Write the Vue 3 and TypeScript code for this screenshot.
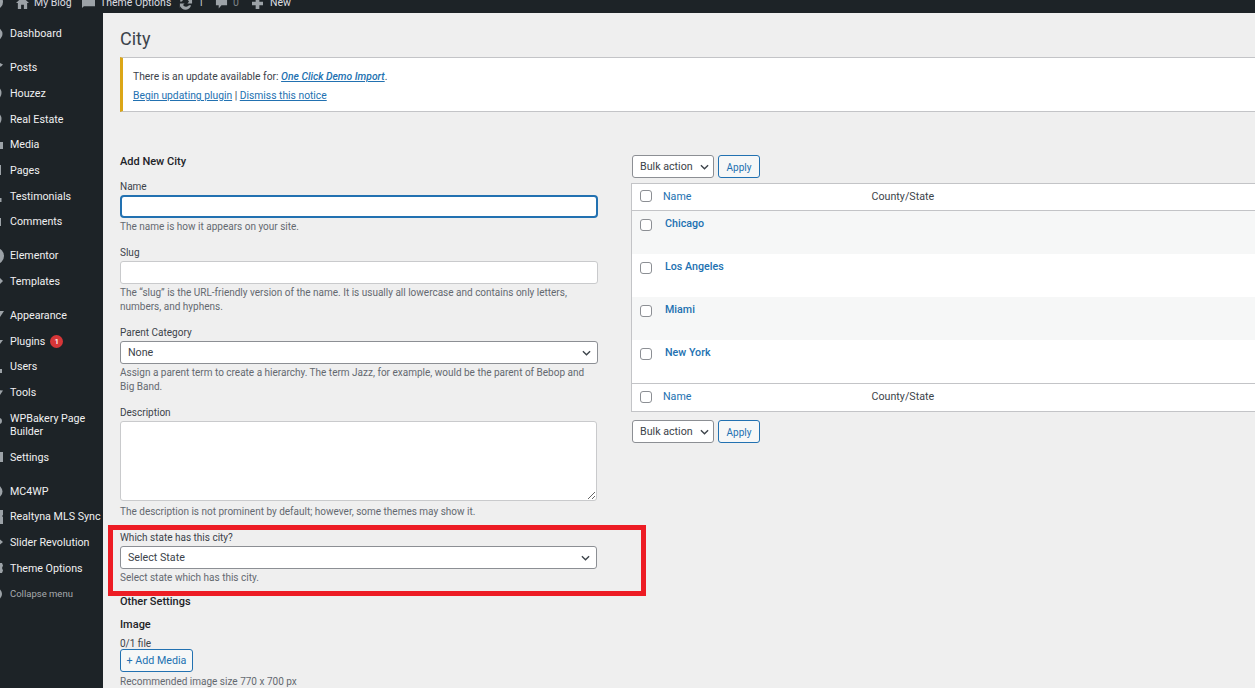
<script setup lang="ts">
interface MenuItem {
  label: string
  icon: string
  sep?: boolean
  tall?: boolean
  badge?: string
  muted?: boolean
}

const ring = 'M10 2.5a7.5 7.5 0 1 0 0 15a7.5 7.5 0 1 0 0-15zm0 1.6a5.9 5.9 0 1 1 0 11.8a5.9 5.9 0 1 1 0-11.8z'

const menu: MenuItem[] = [
  { label: 'Dashboard', icon: 'M12 3.5a6.5 6.5 0 1 0 0 13a6.5 6.5 0 1 0 0-13z' },
  { label: 'Posts', icon: 'M14 4l5 2.5l-2 2l-3 1z', sep: true },
  { label: 'Houzez', icon: ring },
  { label: 'Real Estate', icon: ring },
  { label: 'Media', icon: 'M12 7h7v7h-7z' },
  { label: 'Pages', icon: 'M11 5h6v10h-6z' },
  { label: 'Testimonials', icon: 'M12 12h5.5v4h-5.5z' },
  { label: 'Comments', icon: 'M11 6h6v8h-6z' },
  { label: 'Elementor', icon: 'M12 2a8 8 0 1 0 0 16a8 8 0 1 0 0-16z', sep: true },
  { label: 'Templates', icon: 'M12 7h4l3 3l-3 3h-4z' },
  { label: 'Appearance', icon: 'M12 6h8l-4 6z', sep: true },
  { label: 'Plugins', icon: 'M14 9h5l-3 4h-2z', badge: '1' },
  { label: 'Users', icon: 'M12 12h6v4h-6z' },
  { label: 'Tools', icon: 'M12 8l7 .5l-3 4.5h-4z' },
  { label: 'WPBakery Page Builder', icon: 'M15 3a3 3 0 1 0 0 6a3 3 0 0 0 0-6z', tall: true },
  { label: 'Settings', icon: 'M11 5h8v10h-8z' },
  { label: 'MC4WP', icon: 'M12 4a6.5 6.5 0 1 0 0 13a6.5 6.5 0 1 0 0-13z', sep: true },
  { label: 'Realtyna MLS Sync', icon: 'M12 3h7v5l-1 1l1 1v7h-7z' },
  { label: 'Slider Revolution', icon: 'M14 6l5 4l-5 4z' },
  { label: 'Theme Options', icon: 'M12 5h6l1 2.5l-1 2.5l1 2.5l-1 2.5h-6z' },
  { label: 'Collapse menu', icon: 'M12 4a6 6 0 1 0 0 12a6 6 0 1 0 0-12z', muted: true },
]

const cities = ['Chicago', 'Los Angeles', 'Miami', 'New York']
</script>

<template>
  <div class="page">
    <header class="topbar">
      <div class="topbar-inner">
        <svg class="bar-logo" viewBox="0 0 4 14"><circle cx="-4" cy="7" r="7" /></svg>
        <svg class="bar-home" viewBox="0 0 14 14"><path d="M7 1L0 7.5h2V14h3.5V9.500h3V14H12V7.500h2z" /></svg>
        <span class="bar-blog">My Blog</span>
        <svg class="bar-speech" viewBox="0 0 16 14"><path d="M1 2h13l1 1v8H3l-2 2z" /></svg>
        <span class="bar-theme">Theme Options</span>
        <svg class="bar-refresh" viewBox="0 0 16 16"><path d="M8 2a6 6 0 0 1 5.500 3.500L15 4v5h-5l1.700-1.700A4 4 0 0 0 4.200 7H2.100A6 6 0 0 1 8 2zM2 14V9h5l-1.700 1.700A4 4 0 0 0 11.800 11h2.100A6 6 0 0 1 2.500 12z" /></svg>
        <span class="bar-count">1</span>
        <svg class="bar-comment" viewBox="0 0 14 14"><path d="M1 1h12v8H7l-3 3.500V9H1z" /></svg>
        <span class="bar-zero">0</span>
        <svg class="bar-plus" viewBox="0 0 12 12"><path d="M4 0h4v4h4v4H8v4H4V8H0V4h4z" /></svg>
        <span class="bar-new">New</span>
      </div>
    </header>

    <div class="body-row">
      <nav class="sidebar">
        <a
          v-for="item in menu"
          :key="item.label"
          class="menu-item"
          :class="{ sep: item.sep, tall: item.tall, muted: item.muted }"
        >
          <svg class="menu-icon" viewBox="0 0 20 20"><path :d="item.icon" fill-rule="evenodd" /></svg>
          <span class="menu-label">{{ item.label }}</span>
          <span v-if="item.badge" class="badge">{{ item.badge }}</span>
        </a>
      </nav>

      <main class="content">
        <h1 class="title">City</h1>

        <div class="notice">
          <p>There is an update available for: <a class="strong-link">One Click Demo Import</a>.</p>
          <p class="notice-actions"><a>Begin updating plugin</a> | <a>Dismiss this notice</a></p>
        </div>

        <div class="columns">
          <section class="form-col">
            <h2 class="add-title">Add New City</h2>

            <label class="field-label">Name</label>
            <input class="text-input focus" type="text" />
            <p class="help">The name is how it appears on your site.</p>

            <label class="field-label next">Slug</label>
            <input class="text-input" type="text" />
            <p class="help">The “slug” is the URL-friendly version of the name. It is usually all lowercase and contains only letters, numbers, and hyphens.</p>

            <label class="field-label next">Parent Category</label>
            <div class="select-wrap">
              <select class="select"><option>None</option></select>
              <svg class="chevron" viewBox="0 0 10 6"><path d="M1 1l4 4l4-4" /></svg>
            </div>
            <p class="help">Assign a parent term to create a hierarchy. The term Jazz, for example, would be the parent of Bebop and Big Band.</p>

            <label class="field-label next">Description</label>
            <textarea class="textarea"></textarea>
            <p class="help desc-help">The description is not prominent by default; however, some themes may show it.</p>

            <div class="highlight">
              <label class="field-label">Which state has this city?</label>
              <div class="select-wrap narrow">
                <select class="select"><option>Select State</option></select>
                <svg class="chevron" viewBox="0 0 10 6"><path d="M1 1l4 4l4-4" /></svg>
              </div>
              <p class="help">Select state which has this city.</p>
            </div>

            <h3 class="other">Other Settings</h3>
            <h3 class="image-title">Image</h3>
            <div class="file-count">0/1 file</div>
            <button class="outline-btn add-media" type="button">+ Add Media</button>
            <p class="help rec">Recommended image size 770 x 700 px</p>
          </section>

          <section class="table-col">
            <div class="tablenav">
              <div class="select-wrap bulk">
                <select class="select"><option>Bulk actions</option></select>
                <svg class="chevron" viewBox="0 0 10 6"><path d="M1 1l4 4l4-4" /></svg>
              </div>
              <button class="outline-btn apply" type="button">Apply</button>
            </div>

            <div class="table">
              <div class="thead">
                <input class="check" type="checkbox" />
                <a class="col-name">Name</a>
                <span class="col-state">County/State</span>
              </div>
              <div v-for="city in cities" :key="city" class="tr">
                <input class="check" type="checkbox" />
                <a class="city">{{ city }}</a>
              </div>
              <div class="thead tfoot">
                <input class="check" type="checkbox" />
                <a class="col-name">Name</a>
                <span class="col-state">County/State</span>
              </div>
            </div>

            <div class="tablenav lower">
              <div class="select-wrap bulk">
                <select class="select"><option>Bulk actions</option></select>
                <svg class="chevron" viewBox="0 0 10 6"><path d="M1 1l4 4l4-4" /></svg>
              </div>
              <button class="outline-btn apply" type="button">Apply</button>
            </div>
          </section>
        </div>
      </main>
    </div>
  </div>
</template>

<style>
html, body { margin: 0; height: 688px; overflow: hidden; background: #f0f0f1; }
</style>

<style scoped>
* { box-sizing: border-box; }
.page {
  width: 1255px;
  height: 688px;
  overflow: hidden;
  font-family: Roboto, "Open Sans", sans-serif;
  font-size: 10px;
  color: #3c434a;
  background: #efefef;
}
.topbar { height: 13px; background: #1d2327; overflow: hidden; }
.topbar-inner {
  display: flex;
  align-items: center;
  height: 26px;
  margin-top: -11px;
  color: #c3c4c7;
  font-size: 10.500px;
  line-height: 13px;
}
.topbar-inner svg { flex: none; fill: #9ca2a7; }
.bar-logo { width: 4px; height: 14px; }
.bar-home { width: 13px; height: 13px; margin-left: 12px; margin-top: 1px; }
.bar-blog { margin-left: 5px; width: 36px; white-space: nowrap; color: #dcdde0; }
.bar-speech { width: 15px; height: 13px; margin-left: 11px; }
.bar-theme { margin-left: 4px; width: 67px; white-space: nowrap; color: #dcdde0; }
.bar-refresh { width: 15px; height: 15px; margin-left: 11px; }
.bar-count { margin-left: 5px; width: 8px; }
.bar-comment { width: 13px; height: 13px; margin-left: 9px; margin-top: 2px; }
.bar-zero { margin-left: 5px; width: 8px; color: #7e8388; }
.bar-plus { width: 11px; height: 11px; margin-left: 11px; margin-top: 2px; }
.bar-new { margin-left: 7px; color: #dcdde0; }

.body-row { display: flex; height: 675px; }
.sidebar {
  flex: none;
  width: 103px;
  height: 675px;
  padding-top: 8px;
  background: #1d2327;
  color: #f0f0f1;
  font-size: 10.700px;
  overflow: hidden;
}
.menu-item {
  display: flex;
  align-items: center;
  height: 25.670px;
  line-height: 13px;
  white-space: nowrap;
}
.menu-item.sep { margin-top: 8.330px; }
.menu-item.tall { height: 39.200px; white-space: normal; }
.menu-item.tall .menu-label { width: 88px; }
.menu-item.muted { color: #a7aaad; font-size: 9.500px; }
.menu-icon {
  flex: none;
  width: 20px;
  height: 20px;
  margin-left: -16px;
  margin-right: 6px;
  fill: #9ca2a7;
}
.badge {
  flex: none;
  width: 13px;
  height: 13px;
  margin-left: 5px;
  border-radius: 50%;
  background: #d63638;
  color: #fff;
  font-size: 8px;
  line-height: 13px;
  text-align: center;
  font-weight: 500;
}

.content { flex: 1; min-width: 0; padding-left: 17px; }
.title {
  margin: 16px 0 0;
  height: 20px;
  font-size: 18px;
  line-height: 20px;
  font-weight: 400;
  color: #3c434a;
}
.notice {
  margin: 8px -10px 0 0;
  height: 55px;
  padding: 11px 0 0 10px;
  background: #fff;
  border: 1px solid #c3c4c7;
  border-left: 3px solid #dba617;
  font-size: 10.300px;
}
.notice p { margin: 0; line-height: 16px; }
.notice-actions { margin-top: 3px !important; }
.notice a { color: #2271b1; text-decoration: underline; }
.notice .strong-link { font-style: italic; font-weight: 500; }

.columns {
  display: grid;
  grid-template-columns: 478px 1fr;
  column-gap: 33px;
  margin-top: 43px;
}
.form-col { min-width: 0; }
.add-title {
  margin: 0 0 11px;
  font-size: 11px;
  line-height: 14px;
  font-weight: 500;
  color: #1d2327;
}
.field-label {
  display: block;
  line-height: 14px;
  margin-bottom: 1px;
}
.field-label.next { margin-top: 12px; }
.text-input, .textarea, .select {
  display: block;
  width: 100%;
  background: #fff;
  font: inherit;
  color: #3c434a;
  outline: none;
}
.text-input {
  height: 23px;
  border: 1px solid #c9cacc;
  border-radius: 3px;
}
.text-input.focus {
  border: 2px solid #2271b1;
  border-radius: 4px;
}
.textarea {
  width: 477px;
  height: 80px;
  border: 1px solid #c9cacc;
  border-radius: 3px;
  resize: both;
}
.select-wrap { position: relative; }
.select-wrap.narrow { width: 477px; }
.select {
  height: 23px;
  padding: 0 20px 0 7px;
  border: 1px solid #8c8f94;
  border-radius: 3px;
  font-size: 10.700px;
  appearance: none;
  -webkit-appearance: none;
}
.chevron {
  position: absolute;
  right: 7px;
  top: 9px;
  width: 9px;
  height: 6px;
  fill: none;
  stroke: #3c434a;
  stroke-width: 1.500;
  pointer-events: none;
}
.help {
  margin: 2px 0 0;
  line-height: 14px;
  color: #646970;
}
.desc-help { margin-top: 4px; }
.highlight {
  width: 538px;
  height: 71px;
  margin: 6px 0 0 -12px;
  padding: 1px 0 0 7px;
  border: 5px solid #ed1c24;
}
.other {
  margin: -1px 0 0;
  font-size: 11px;
  line-height: 14px;
  font-weight: 500;
  color: #1d2327;
}
.image-title {
  margin: 9px 0 0;
  font-size: 11px;
  line-height: 14px;
  font-weight: 500;
  color: #1d2327;
}
.file-count { margin-top: 6px; line-height: 12px; }
.outline-btn {
  display: block;
  height: 23px;
  padding: 0;
  font: inherit;
  font-size: 10.700px;
  color: #2271b1;
  background: #f6f7f7;
  border: 1px solid #2271b1;
  border-radius: 3px;
}
.add-media { width: 73px; margin-top: -1px; }
.rec { margin-top: 3px; }

.table-col { min-width: 0; margin-right: -10px; font-size: 10.700px; }
.tablenav { display: flex; gap: 4px; height: 23px; margin-left: 1px; }
.bulk { width: 82px; }
.bulk .chevron { right: 5px; }
.apply { width: 42px; padding-top: 2px; font-size: 10px; }
.table {
  margin-top: 5px;
  background: #fff;
  border: 1px solid #c3c4c7;
}
.thead {
  display: flex;
  align-items: center;
  height: 27px;
  padding-bottom: 2px;
  border-bottom: 1px solid #c3c4c7;
}
.tfoot { height: 28px; border-bottom: 0; border-top: 1px solid #c3c4c7; }
.check {
  flex: none;
  width: 12px;
  height: 12px;
  margin: 0 0 0 8px;
  background: #fff;
  border: 1px solid #8c8f94;
  border-radius: 3px;
  appearance: none;
  -webkit-appearance: none;
}
.col-name { width: 208.500px; margin-left: 11px; color: #2271b1; }
.col-state { color: #3c434a; }
.tr {
  display: flex;
  align-items: flex-start;
  height: 43px;
  padding-top: 6px;
}
.tr:nth-child(even) { background: #f6f7f7; }
.tr .check { margin-top: 2px; }
.city {
  margin-left: 13px;
  line-height: 14px;
  font-weight: 500;
  color: #2271b1;
}
.lower { margin-top: 8px; }
</style>
